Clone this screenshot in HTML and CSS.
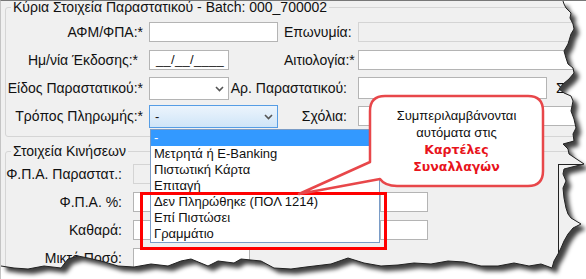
FILE: index.html
```html
<!DOCTYPE html>
<html lang="el">
<head>
    <meta charset="UTF-8">
    <title>Στοιχεία Παραστατικού</title>
    <link rel="stylesheet" href="styles.css">
</head>
<body>
    <div class="shot">
        <!-- Main document data -->
        <fieldset class="group group-main">
            <legend>Κύρια Στοιχεία Παραστατικού - Batch: 000_700002</legend>

            <div class="form-row">
                <label class="lbl">ΑΦΜ/ΦΠΑ:*</label>
                <span class="field field-full"></span>
                <label class="lbl lbl-right">Επωνυμία:</label>
                <span class="field field-disabled field-long"></span>
            </div>

            <div class="form-row">
                <label class="lbl lbl-date">Ημ/νία Έκδοσης:*</label>
                <span class="field field-short field-date">__/__/____</span>
                <label class="lbl lbl-right lbl-req">Αιτιολογία:*</label>
                <span class="field field-long"></span>
            </div>

            <div class="form-row form-row-overlap">
                <label class="lbl">Είδος Παραστατικού:*</label>
                <span class="combo field-short">
                    <svg class="chevron" width="9" height="6" viewBox="0 0 9 6"><path d="M1 1 L4.5 4.5 L8 1" fill="none" stroke="#555" stroke-width="1.6"/></svg>
                </span>
                <label class="lbl lbl-right lbl-span">Αρ. Παραστατικού:</label>
                <span class="cell-row">
                    <span class="field field-number"></span>
                    <span class="lbl">Σειρά:</span>
                </span>
            </div>

            <div class="form-row">
                <label class="lbl">Τρόπος Πληρωμής:*</label>
                <span class="combo combo-open field-full">-
                    <svg class="chevron" width="9" height="6" viewBox="0 0 9 6"><path d="M1 1 L4.5 4.5 L8 1" fill="none" stroke="#555" stroke-width="1.6"/></svg>
                </span>
                <label class="lbl lbl-right">Σχόλια:</label>
                <span class="field field-long"></span>
            </div>
        </fieldset>

        <!-- Line items -->
        <fieldset class="group group-moves">
            <legend>Στοιχεία Κινήσεων</legend>
            <div class="moves">
                <div class="moves-rows">
                    <div class="move-row">
                        <label class="lbl">Φ.Π.Α. Παραστατ.:</label>
                        <span class="field field-disabled field-mid"></span>
                    </div>
                    <div class="move-row">
                        <label class="lbl">Φ.Π.Α. %:</label>
                        <span class="field field-mid"></span>
                        <span class="field field-small"></span>
                    </div>
                    <div class="move-row">
                        <label class="lbl">Καθαρά:</label>
                        <span class="field field-mid"></span>
                        <span class="field field-small"></span>
                    </div>
                    <div class="move-row">
                        <label class="lbl">Μικτό Ποσό:</label>
                        <span class="field field-mid"></span>
                    </div>
                </div>
                <div class="side-panel"></div>
            </div>
        </fieldset>

        <!-- Open dropdown of Τρόπος Πληρωμής -->
        <ul class="droplist">
            <li class="selected">-</li>
            <li>Μετρητά ή E-Banking</li>
            <li>Πιστωτική Κάρτα</li>
            <li>Επιταγή</li>
            <li>Δεν Πληρώθηκε (ΠΟΛ 1214)</li>
            <li>Επί Πιστώσει</li>
            <li>Γραμμάτιο</li>
        </ul>

        <div class="mark-box"></div>

        <!-- Callout -->
        <svg class="overlay" viewBox="0 0 586 279" width="586" height="279">
            <path d="M384 95 H527 Q542 95 542 110 V170 Q542 185 527 185 H396 Q384 185 379 178 L298 193 L369 161 V110 Q369 95 384 95 Z"
                  fill="#fff" stroke="#e8474a" stroke-width="2.5" stroke-linejoin="round"/>
        </svg>
        <div class="callout-text">
            <span>Συμπεριλαμβάνονται</span>
            <span>αυτόματα στις</span>
            <strong>Καρτέλες</strong>
            <strong>Συναλλαγών</strong>
        </div>

        <!-- Torn paper edge -->
        <svg class="overlay" viewBox="0 0 586 279" width="586" height="279">
            <defs>
                <clipPath id="outside">
                    <path clip-rule="evenodd" d="M0 0 H586 V279 H0 Z
                        M0 0 H562 L563 3 L565 7 L570 12 L569 17 L572 23 L573 28 L570 33 L567 43 L563 50 L565 57 L567 63 L572 67 L573 72 L568 78 L562 83 L558 88 L563 92 L570 95 L572 100 L570 110 L573 118 L575 127 L572 133 L573 140 L562 143 L567 148 L568 153 L583 163 L563 168 L562 173 L565 180 L562 187 L563 197 L565 207 L567 213 L570 217 L580 223 L572 227 L567 233 L563 240 L560 247 L557 253 L553 260 L551 267 L540 263 L528 265 L513 262 L497 265 L480 265 L463 261 L447 260 L430 263 L413 262 L397 264 L380 265 L363 262 L347 257 L330 263 L305 266 L290 268 L273 267 L260 260 L240 258 L233 262 L217 260 L207 265 L190 258 L180 260 L167 265 L150 263 L133 266 L117 265 L100 260 L87 257 L77 255 L67 258 L60 267 L43 265 L27 268 L13 267 L0 265 Z"/>
                </clipPath>
                <filter id="blur" x="-10%" y="-10%" width="120%" height="120%">
                    <feGaussianBlur stdDeviation="2"/>
                </filter>
            </defs>
            <g clip-path="url(#outside)">
                <rect width="586" height="279" fill="#fff"/>
                <path transform="translate(5 5)" filter="url(#blur)" fill="#000" fill-opacity="0.75"
                      d="M0 0 H562 L563 3 L565 7 L570 12 L569 17 L572 23 L573 28 L570 33 L567 43 L563 50 L565 57 L567 63 L572 67 L573 72 L568 78 L562 83 L558 88 L563 92 L570 95 L572 100 L570 110 L573 118 L575 127 L572 133 L573 140 L562 143 L567 148 L568 153 L583 163 L563 168 L562 173 L565 180 L562 187 L563 197 L565 207 L567 213 L570 217 L580 223 L572 227 L567 233 L563 240 L560 247 L557 253 L553 260 L551 267 L540 263 L528 265 L513 262 L497 265 L480 265 L463 261 L447 260 L430 263 L413 262 L397 264 L380 265 L363 262 L347 257 L330 263 L305 266 L290 268 L273 267 L260 260 L240 258 L233 262 L217 260 L207 265 L190 258 L180 260 L167 265 L150 263 L133 266 L117 265 L100 260 L87 257 L77 255 L67 258 L60 267 L43 265 L27 268 L13 267 L0 265 Z"/>
            </g>
            <path fill="none" stroke="#222" stroke-width="1"
                  d="M562 0 L563 3 L565 7 L570 12 L569 17 L572 23 L573 28 L570 33 L567 43 L563 50 L565 57 L567 63 L572 67 L573 72 L568 78 L562 83 L558 88 L563 92 L570 95 L572 100 L570 110 L573 118 L575 127 L572 133 L573 140 L562 143 L567 148 L568 153 L583 163 L563 168 L562 173 L565 180 L562 187 L563 197 L565 207 L567 213 L570 217 L580 223 L572 227 L567 233 L563 240 L560 247 L557 253 L553 260 L551 267 L540 263 L528 265 L513 262 L497 265 L480 265 L463 261 L447 260 L430 263 L413 262 L397 264 L380 265 L363 262 L347 257 L330 263 L305 266 L290 268 L273 267 L260 260 L240 258 L233 262 L217 260 L207 265 L190 258 L180 260 L167 265 L150 263 L133 266 L117 265 L100 260 L87 257 L77 255 L67 258 L60 267 L43 265 L27 268 L13 267 L0 265"/>
        </svg>
    </div>
</body>
</html>
```

FILE: styles.css
```css
body {
    margin: 0;
    background-color: #fff;
    font-family: "Liberation Sans", Arial, sans-serif;
    font-size: 13px;
    color: #111;
}

.shot {
    position: relative;
    width: 586px;
    height: 279px;
    overflow: hidden;
    background-color: #f0f0f0;
    padding: 0 0 0 4px;
    box-sizing: border-box;
    border-top: 1px solid #777;
    border-left: 1px solid #c4c4c4;
}

/* Group boxes */
.group {
    margin: 0 -60px 0 0;
    padding: 4px 0 6px 0;
    border: 1px solid #d5d5d5;
    border-radius: 3px;
    min-width: 0;
}

.group legend {
    margin-left: 5px;
    padding: 0 2px;
    font-size: 14px;
    line-height: 13px;
}

.group-moves {
    margin-top: 8px;
    padding-top: 2px;
}

.lbl {
    font-size: 14px;
    text-align: right;
    white-space: nowrap;
}

.form-row {
    display: grid;
    grid-template-columns: 137px 129px 68px 1fr;
    column-gap: 6px;
    height: 28px;
    align-items: center;
}

.form-row-overlap > * {
    grid-row: 1;
}

.form-row-overlap > .lbl:first-child {
    grid-column: 1;
}

.form-row-overlap > .combo {
    grid-column: 2;
    justify-self: start;
}

.form-row-overlap > .lbl-span {
    grid-column: 2 / 4;
    justify-self: end;
}

.form-row-overlap > .cell-row {
    grid-column: 4;
}

.lbl-right {
    padding-right: 5px;
}

.lbl-req {
    margin-right: -7px;
}

.lbl-date {
    padding-right: 5px;
}

/* Line items */
.moves {
    display: flex;
    align-items: flex-start;
}

.moves-rows {
    width: 541px;
}

.move-row {
    display: grid;
    grid-template-columns: 127px 247px 167px;
    height: 28px;
    align-items: center;
}

.move-row .lbl {
    justify-self: end;
    padding-right: 11px;
}

.side-panel {
    width: 40px;
    height: 94px;
    margin: 4px 0 0 11px;
    border-left: 1px solid #222;
    border-top: 1px solid #222;
    background-color: #f0f0f0;
}

/* Fake inputs */
.field {
    display: block;
    height: 20px;
    box-sizing: border-box;
    background-color: #fff;
    border: 1px solid #b4b4b4;
}

.field-disabled {
    background-color: #f0f0f0;
    border-color: #d4d4d4;
}

.field-full {
    width: 129px;
}

.field-short {
    width: 80px;
}

.field-long {
    width: 240px;
}

.field-number {
    width: 189px;
    height: 22px;
}

.field-mid {
    width: 117px;
}

.field-small {
    width: 48px;
}

.field-date {
    padding: 1px 0 0 6px;
    line-height: 16px;
    letter-spacing: 0.3px;
}

.cell-row {
    display: flex;
    align-items: center;
    gap: 9px;
}

.combo {
    position: relative;
    display: block;
    height: 23px;
    box-sizing: border-box;
    background-color: #fff;
    border: 1px solid #b4b4b4;
    padding-left: 5px;
    line-height: 21px;
}

.combo-open {
    border-color: #569de5;
    background: linear-gradient(#ecf4fc, #cfe5f8);
}

.chevron {
    position: absolute;
    right: 4px;
    top: 8px;
}

/* Open dropdown */
.droplist {
    position: absolute;
    left: 149px;
    top: 128px;
    width: 230px;
    margin: 0;
    padding: 0;
    list-style: none;
    background-color: #fff;
    border: 1px solid #7a9cc7;
    box-sizing: border-box;
}

.droplist li {
    height: 16px;
    line-height: 16px;
    padding-left: 3px;
    white-space: nowrap;
}

.droplist .selected {
    background-color: #3399ff;
    color: #fff;
}

.mark-box {
    position: absolute;
    left: 139px;
    top: 191px;
    width: 247px;
    height: 58px;
    box-sizing: border-box;
    border: 3px solid #f00;
}

.overlay {
    position: absolute;
    left: 0;
    top: 0;
    pointer-events: none;
}

.callout-text {
    position: absolute;
    left: 369px;
    top: 95px;
    width: 173px;
    height: 90px;
    display: flex;
    flex-direction: column;
    justify-content: center;
    align-items: center;
    line-height: 17px;
    color: #111;
}

.callout-text strong {
    color: #e8141c;
    font-family: "DejaVu Sans", sans-serif;
    font-size: 12.5px;
}
```
